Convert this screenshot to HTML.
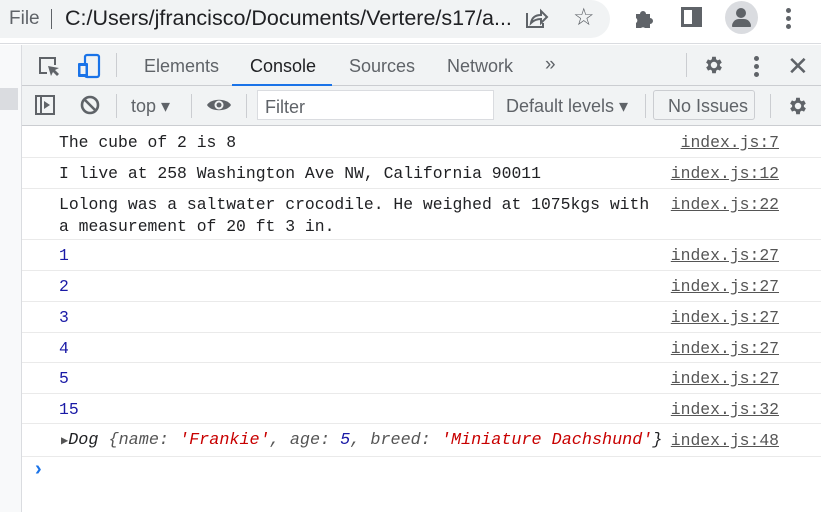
<!DOCTYPE html>
<html><head><style>
*{margin:0;padding:0;box-sizing:border-box}
body{width:821px;height:512px;overflow:hidden;background:#fff;font-family:"Liberation Sans",sans-serif;position:relative}
.abs{position:absolute}
.top{left:0;top:0;width:821px;height:44px;background:#fff;border-bottom:1px solid #dadce0}
.pill{left:-20px;top:0;width:630px;height:38px;background:#f1f3f4;border-radius:0 19px 19px 0}
.side{left:0;top:45px;width:22px;height:467px;background:#f8f9fa;border-right:1px solid #dadce0}
.tabs{left:22px;top:45px;width:799px;height:41px;background:#f1f3f4;border-bottom:1px solid #cbcdd1}
.tb{left:22px;top:86px;width:799px;height:40px;background:#f1f3f4;border-bottom:1px solid #cbcdd1}
.t{font-size:18px;color:#5f6368}
.row{position:absolute;left:22px;width:799px;border-bottom:1px solid #eaeaea;font-family:"Liberation Mono",monospace;font-size:16.4px;line-height:22px}
.row .m{position:absolute;left:37px;top:5px;color:#202124;white-space:pre}
.row .l{position:absolute;right:42px;top:5px;color:#555;text-decoration:underline}
.n{color:#1a1aa6!important}
.sep{width:1px;height:24px;background:#cbcdd1}
</style></head><body>
<div class="abs top"></div>
<div class="abs pill"></div>
<div class="abs t" style="left:9px;top:8px;font-size:19px">File</div>
<div class="abs" style="left:51px;top:9px;width:1px;height:20px;background:#5f6368"></div>
<div class="abs" style="left:65px;top:6px;font-size:21.5px;color:#202124">C:/Users/jfrancisco/Documents/Vertere/s17/a...</div>
<svg class="abs" style="left:523px;top:7px" width="26" height="24" viewBox="0 0 26 24"><path d="M4 6v14h16v-4M8 16c1-6 5-8 10-8V4l6 6-6 6v-4c-4 0-7 1-10 4z" fill="none" stroke="#5f6368" stroke-width="2"/></svg>
<div class="abs" style="left:573px;top:3px;font-size:24px;color:#5f6368">☆</div>
<svg class="abs" style="left:633px;top:7px" width="22" height="22" viewBox="0 0 22 22"><path d="M3 7h4a3 3 0 016 0h4v4a3 3 0 010 6v4h-5a3 3 0 00-4 0H3v-5a3 3 0 000-5z" fill="#5f6368"/></svg>
<div class="abs" style="left:681px;top:7px;width:21px;height:20px;border:3px solid #5f6368;border-right-width:10px"></div>
<div class="abs" style="left:725px;top:1px;width:33px;height:33px;border-radius:50%;background:#dadce0"></div>
<div class="abs" style="left:736px;top:8px;width:10px;height:10px;border-radius:50%;background:#5f6368"></div>
<div class="abs" style="left:732px;top:19px;width:19px;height:8px;border-radius:8px 8px 1px 1px;background:#5f6368"></div>
<div class="abs" style="left:786px;top:8px;width:5px;height:5px;border-radius:50%;background:#5f6368;box-shadow:0 8px #5f6368,0 16px #5f6368"></div>

<div class="abs side"></div>
<div class="abs" style="left:0;top:88px;width:18px;height:22px;background:#dadce0"></div>
<div class="abs tabs"></div>
<svg class="abs" style="left:37px;top:55px" width="24" height="24" viewBox="0 0 24 24"><path d="M10 18H3V3h15v7" fill="none" stroke="#5f6368" stroke-width="2"/><path d="M11 11l3 10 2-4 4 4 2-2-4-4 4-2z" fill="#5f6368"/></svg>
<svg class="abs" style="left:77px;top:53px" width="24" height="26" viewBox="0 0 24 26"><rect x="8" y="2" width="14" height="22" rx="2" fill="none" stroke="#1a73e8" stroke-width="2.2"/><rect x="1" y="10" width="10" height="14" rx="1" fill="#1a73e8"/><rect x="3.5" y="13" width="5" height="8" fill="#f1f3f4"/></svg>
<div class="abs sep" style="left:116px;top:53px"></div>
<div class="abs t" style="left:144px;top:56px">Elements</div>
<div class="abs t" style="left:250px;top:56px;color:#202124">Console</div>
<div class="abs" style="left:232px;top:84px;width:100px;height:2px;background:#1a73e8"></div>
<div class="abs t" style="left:349px;top:56px">Sources</div>
<div class="abs t" style="left:447px;top:56px">Network</div>
<div class="abs t" style="left:545px;top:54px;font-size:19px">»</div>
<div class="abs sep" style="left:686px;top:53px"></div>
<svg class="abs" style="left:703px;top:54px" width="22" height="22" viewBox="0 0 24 24"><path fill="#5f6368" d="M19.4 13a7.5 7.5 0 000-2l2.1-1.6-2-3.5-2.5 1a7.5 7.5 0 00-1.7-1L15 3h-4l-.4 2.9a7.5 7.5 0 00-1.7 1l-2.5-1-2 3.5L6.6 11a7.5 7.5 0 000 2l-2.1 1.6 2 3.5 2.5-1a7.5 7.5 0 001.7 1L11 21h4l.4-2.9a7.5 7.5 0 001.7-1l2.5 1 2-3.5zM13 15.5a3.5 3.5 0 110-7 3.5 3.5 0 010 7z" transform="translate(-1 0)"/></svg>
<div class="abs" style="left:754px;top:56px;width:5px;height:5px;border-radius:50%;background:#5f6368;box-shadow:0 8px #5f6368,0 16px #5f6368"></div>
<div class="abs" style="left:787px;top:51px;font-size:26px;color:#5f6368">✕</div>

<div class="abs tb"></div>
<svg class="abs" style="left:35px;top:95px" width="20" height="20" viewBox="0 0 20 20"><rect x="1" y="1" width="18" height="18" fill="none" stroke="#5f6368" stroke-width="2"/><path d="M6 1v18" stroke="#5f6368" stroke-width="2"/><path d="M9 6l6 4-6 4z" fill="#5f6368"/></svg>
<svg class="abs" style="left:80px;top:95px" width="20" height="20" viewBox="0 0 20 20"><circle cx="10" cy="10" r="8" fill="none" stroke="#5f6368" stroke-width="2.6"/><path d="M4.5 4.5l11 11" stroke="#5f6368" stroke-width="2.6"/></svg>
<div class="abs sep" style="left:116px;top:94px"></div>
<div class="abs t" style="left:131px;top:96px">top ▾</div>
<div class="abs sep" style="left:191px;top:94px"></div>
<svg class="abs" style="left:206px;top:97px" width="26" height="16" viewBox="0 0 26 16"><path d="M1 8C5 1 21 1 25 8 21 15 5 15 1 8z" fill="#5f6368"/><circle cx="13" cy="8" r="4.5" fill="#f1f3f4"/><circle cx="13" cy="8" r="2.5" fill="#5f6368"/></svg>
<div class="abs sep" style="left:246px;top:94px"></div>
<div class="abs" style="left:257px;top:90px;width:237px;height:30px;background:#fff;border:1px solid #dadce0"></div>
<div class="abs t" style="left:265px;top:97px">Filter</div>
<div class="abs t" style="left:506px;top:96px">Default levels ▾</div>
<div class="abs sep" style="left:645px;top:94px"></div>
<div class="abs" style="left:653px;top:90px;width:102px;height:30px;border:1px solid #cbcdd1;border-radius:3px"></div>
<div class="abs t" style="left:668px;top:96px">No Issues</div>
<div class="abs sep" style="left:770px;top:94px"></div>
<svg class="abs" style="left:787px;top:95px" width="22" height="22" viewBox="0 0 24 24"><path fill="#5f6368" d="M19.4 13a7.5 7.5 0 000-2l2.1-1.6-2-3.5-2.5 1a7.5 7.5 0 00-1.7-1L15 3h-4l-.4 2.9a7.5 7.5 0 00-1.7 1l-2.5-1-2 3.5L6.6 11a7.5 7.5 0 000 2l-2.1 1.6 2 3.5 2.5-1a7.5 7.5 0 001.7 1L11 21h4l.4-2.9a7.5 7.5 0 001.7-1l2.5 1 2-3.5zM13 15.5a3.5 3.5 0 110-7 3.5 3.5 0 010 7z" transform="translate(-1 0)"/></svg>

<div class="row" style="top:127px;height:31px"><span class="m">The cube of 2 is 8</span><span class="l">index.js:7</span></div>
<div class="row" style="top:158px;height:31px"><span class="m">I live at 258 Washington Ave NW, California 90011</span><span class="l">index.js:12</span></div>
<div class="row" style="top:189px;height:51px"><span class="m">Lolong was a saltwater crocodile. He weighed at 1075kgs with
a measurement of 20 ft 3 in.</span><span class="l">index.js:22</span></div>
<div class="row" style="top:240px;height:31px"><span class="m n">1</span><span class="l">index.js:27</span></div>
<div class="row" style="top:271px;height:31px"><span class="m n">2</span><span class="l">index.js:27</span></div>
<div class="row" style="top:302px;height:31px"><span class="m n">3</span><span class="l">index.js:27</span></div>
<div class="row" style="top:333px;height:30px"><span class="m n">4</span><span class="l">index.js:27</span></div>
<div class="row" style="top:363px;height:31px"><span class="m n">5</span><span class="l">index.js:27</span></div>
<div class="row" style="top:394px;height:30px"><span class="m n">15</span><span class="l">index.js:32</span></div>
<div class="row" style="top:424px;height:33px"><span class="m" style="left:39px;font-style:italic;top:6px;font-size:16.8px"><span style="font-style:normal;color:#555;font-size:12px">▶</span>Dog <span style="color:#555">{name: </span><span style="color:#c80000">'Frankie'</span><span style="color:#555">, age: </span><span style="color:#1a1aa6">5</span><span style="color:#555">, breed: </span><span style="color:#c80000">'Miniature Dachshund'</span>}</span><span class="l" style="top:6px">index.js:48</span></div>
<div class="abs" style="left:35px;top:458px;color:#1a73e8;font-size:20px;font-weight:bold">›</div>
</body></html>
